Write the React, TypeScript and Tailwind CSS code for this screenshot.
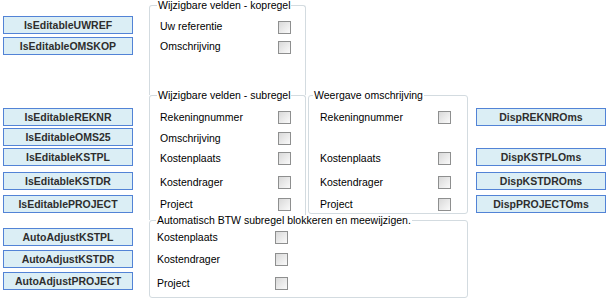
import React from "react";

const font = "font-['Liberation_Sans',Arial,sans-serif]";

function Btn({ label, mt }: { label: string; mt: string }) {
  return (
    <div
      className={`${mt} h-[18px] w-[130px] flex items-center justify-center border border-[#5283d6] bg-[#dbeef5] text-[10.5px] font-bold text-[#2e2e2e] leading-none`}
    >
      {label}
    </div>
  );
}

function Check() {
  return (
    <div className="w-[13px] h-[13px] border border-[#8e8f8f] bg-gradient-to-br from-[#d9d9d9] to-[#fafafa] shrink-0" />
  );
}

function Row({
  label,
  mt,
  pl,
  lift = "",
}: {
  label: string;
  mt: string;
  pl: string;
  lift?: string;
}) {
  return (
    <div className={`${mt} ${pl} h-[13px] flex items-center`}>
      <span className={`w-[118px] text-[10.5px] leading-[13px] text-black whitespace-nowrap ${lift}`}>
        {label}
      </span>
      <Check />
    </div>
  );
}

function Title({ text, left }: { text: string; left: string }) {
  return (
    <span
      className={`absolute ${left} top-[-6px] bg-white px-[1px] text-[10.5px] leading-[10px] text-black whitespace-nowrap`}
    >
      {text}
    </span>
  );
}

export default function App() {
  return (
    <div className={`${font} w-[610px] h-[299px] bg-white flex pl-[3px] overflow-hidden`}>
      {/* left column */}
      <div className="w-[130px] flex flex-col">
        <Btn label="IsEditableUWREF" mt="mt-[16px]" />
        <Btn label="IsEditableOMSKOP" mt="mt-[3px]" />
        <Btn label="IsEditableREKNR" mt="mt-[53px]" />
        <Btn label="IsEditableOMS25" mt="mt-[2px]" />
        <Btn label="IsEditableKSTPL" mt="mt-[2px]" />
        <Btn label="IsEditableKSTDR" mt="mt-[6px]" />
        <Btn label="IsEditablePROJECT" mt="mt-[5px]" />
        <Btn label="AutoAdjustKSTPL" mt="mt-[15px]" />
        <Btn label="AutoAdjustKSTDR" mt="mt-[4px]" />
        <Btn label="AutoAdjustPROJECT" mt="mt-[4px]" />
      </div>

      {/* middle column */}
      <div className="ml-[16px] w-[319px] flex flex-col">
        {/* group 1 */}
        <div className="relative mt-[5px] w-[157px] h-[90px] border border-b-0 border-[#d3dbe0] rounded-t-[3px] flex flex-col">
          <Title text="Wijzigbare velden - kopregel" left="left-[7px]" />
          <Row label="Uw referentie" mt="mt-[15px]" pl="pl-[10px]" lift="mb-[3px]" />
          <Row label="Omschrijving" mt="mt-[7px]" pl="pl-[10px]" lift="mb-[2px]" />
        </div>

        <div className="flex">
          {/* group 2 */}
          <div className="relative w-[157px] h-[125px] border border-b-0 border-[#d3dbe0] rounded-t-[3px] flex flex-col">
            <Title text="Wijzigbare velden - subregel" left="left-[7px]" />
            <Row label="Rekeningnummer" mt="mt-[15px]" pl="pl-[10px]" />
            <Row label="Omschrijving" mt="mt-[8px]" pl="pl-[10px]" />
            <Row label="Kostenplaats" mt="mt-[7px]" pl="pl-[10px]" />
            <Row label="Kostendrager" mt="mt-[11px]" pl="pl-[10px]" />
            <Row label="Project" mt="mt-[9px]" pl="pl-[10px]" />
          </div>
          {/* group 3 */}
          <div className="relative ml-[2px] w-[160px] h-[119px] border border-[#d3dbe0] rounded-[3px] flex flex-col">
            <Title text="Weergave omschrijving" left="left-[4px]" />
            <Row label="Rekeningnummer" mt="mt-[15px]" pl="pl-[11px]" />
            <Row label="Kostenplaats" mt="mt-[28px]" pl="pl-[11px]" />
            <Row label="Kostendrager" mt="mt-[11px]" pl="pl-[11px]" />
            <Row label="Project" mt="mt-[9px]" pl="pl-[11px]" />
          </div>
        </div>

        {/* group 4 */}
        <div className="relative w-[319px] h-[78px] border border-[#d3dbe0] rounded-[3px] flex flex-col">
          <Title text="Automatisch BTW subregel blokkeren en meewijzigen." left="left-[6px]" />
          <Row label="Kostenplaats" mt="mt-[10px]" pl="pl-[7px]" />
          <Row label="Kostendrager" mt="mt-[9px]" pl="pl-[7px]" />
          <Row label="Project" mt="mt-[11px]" pl="pl-[7px]" />
        </div>
      </div>

      {/* right column */}
      <div className="ml-[8px] w-[130px] flex flex-col">
        <Btn label="DispREKNROms" mt="mt-[108px]" />
        <Btn label="DispKSTPLOms" mt="mt-[22px]" />
        <Btn label="DispKSTDROms" mt="mt-[6px]" />
        <Btn label="DispPROJECTOms" mt="mt-[5px]" />
      </div>
    </div>
  );
}
